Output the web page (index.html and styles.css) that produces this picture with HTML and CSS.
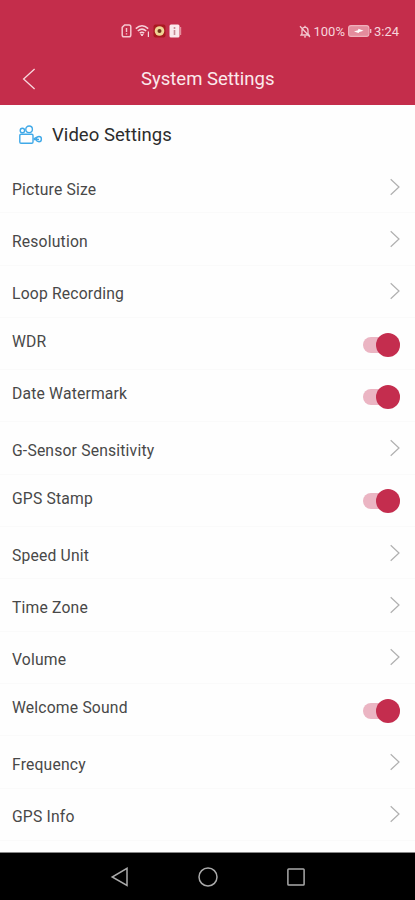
FILE: index.html
```
<!DOCTYPE html>
<html lang="en">
<head>
  <meta charset="UTF-8">
  <meta name="viewport" content="width=device-width, initial-scale=1.0">
  <title>System Settings</title>
  <link rel="stylesheet" href="styles.css">
</head>
<body>
  <!-- shared icons -->
  <svg class="sprite" width="0" height="0">
    <symbol id="chevron" viewBox="0 0 10 18">
      <path d="M0.7 1.2 L9 9 L0.7 16.8" fill="none" stroke="#b0b0b0" stroke-width="1.2"/>
    </symbol>
  </svg>

  <header class="header">
    <div class="status-bar">
      <div class="status-left">
        <svg width="11" height="14" viewBox="0 0 11 14" fill="none" stroke="#f5c6cf">
          <path d="M1.2 3.4 L3.6 1 H8 Q9.8 1 9.8 2.8 V11 Q9.8 12.8 8 12.8 H3 Q1.2 12.8 1.2 11 Z" stroke-width="1.5"/>
          <path d="M5.5 4 V8 M5.5 9.2 V10.6" stroke-width="1.4"/>
        </svg>
        <svg width="15" height="14" viewBox="0 0 15 14" fill="none" stroke="#f5d3da">
          <path d="M0.8 4.6 Q7 -1 13.2 4.6 M2.8 7 Q7 3.3 11.2 7 M4.8 9.2 Q7 7.4 9.2 9.2" stroke-width="1.5"/>
          <path d="M5.8 10.4 L7 12 L8.2 10.4 Z" fill="#f5d3da"/>
          <path d="M13.4 7.5 V13" stroke-width="1.2"/>
        </svg>
        <svg width="13" height="14" viewBox="0 0 13 14">
          <rect x="0.5" y="0.5" width="12" height="13" rx="2" fill="#a91a20"/>
          <circle cx="6.5" cy="7" r="4.8" fill="#efd594"/>
          <circle cx="6.5" cy="7" r="2" fill="#71351c"/>
        </svg>
        <svg width="13" height="14" viewBox="0 0 13 14">
          <rect x="0.5" y="0.5" width="10" height="13" rx="1.5" fill="#fae9ec"/>
          <path d="M11.5 3 V11" stroke="#e58d9c" stroke-width="1.4"/>
          <path d="M5.5 3 V5 M5.5 6 V11" stroke="#c78b95" stroke-width="1.6"/>
        </svg>
      </div>
      <div class="status-right">
        <svg width="12" height="13" viewBox="0 0 12 13" fill="none" stroke="#f3c8d0" stroke-width="1.3">
          <path d="M2 10 H10 L9 8.5 V5.5 Q9 2.5 6 2.2 Q3 2.5 3 5.5 V8.5 Z M5 11.8 H7 M6 0.8 V2 M1 1.2 L11 12"/>
        </svg>
        <span class="percent">100%</span>
        <svg class="battery" width="24" height="12" viewBox="0 0 24 12">
          <rect x="0.6" y="0.6" width="20.3" height="10.8" rx="2.5" fill="#e48c9d" stroke="#efb1bc" stroke-width="1.1"/>
          <path d="M6 6.5 L10 5.2 L10.5 3.8 L15.5 5.7 L11.3 7 L10.6 8 Z" fill="#fff"/>
          <path d="M22.6 4 V8" stroke="#f0b9c2" stroke-width="1.5"/>
        </svg>
        <span class="time">3:24</span>
      </div>
    </div>
    <div class="title-bar">
      <svg class="back" width="14" height="22" viewBox="0 0 14 22">
        <path d="M12.6 1 L1.6 11 L12.6 21" fill="none" stroke="#f7d8de" stroke-width="1.3"/>
      </svg>
      <h1>System Settings</h1>
    </div>
  </header>

  <main>
    <div class="section-title">
      <svg width="25" height="20" viewBox="0 0 25 20" fill="none" stroke="#40a9e8" stroke-width="1.4">
        <circle cx="4.4" cy="5.5" r="2.2"/>
        <circle cx="11.1" cy="4.3" r="3.3"/>
        <rect x="1.8" y="9.2" width="13.2" height="9" rx="1.2"/>
        <path d="M15.6 13.8 L19 12.2 M15.6 14.5 H21"/>
        <path d="M18.2 14.5 Q18.5 11.5 21 11.5 Q23.4 11.5 23.4 14 Q23.4 16.8 21 16.8 Q18.8 16.8 18 14.8"/>
      </svg>
      <h2>Video Settings</h2>
    </div>

    <ul class="settings">
      <li><span>Picture Size</span><svg class="chevron"><use href="#chevron"/></svg></li>
      <li><span>Resolution</span><svg class="chevron"><use href="#chevron"/></svg></li>
      <li><span>Loop Recording</span><svg class="chevron"><use href="#chevron"/></svg></li>
      <li class="switch-row"><span>WDR</span><div class="toggle"></div></li>
      <li class="switch-row"><span>Date Watermark</span><div class="toggle"></div></li>
      <li><span>G-Sensor Sensitivity</span><svg class="chevron"><use href="#chevron"/></svg></li>
      <li class="switch-row"><span>GPS Stamp</span><div class="toggle"></div></li>
      <li><span>Speed Unit</span><svg class="chevron"><use href="#chevron"/></svg></li>
      <li><span>Time Zone</span><svg class="chevron"><use href="#chevron"/></svg></li>
      <li><span>Volume</span><svg class="chevron"><use href="#chevron"/></svg></li>
      <li class="switch-row"><span>Welcome Sound</span><div class="toggle"></div></li>
      <li><span>Frequency</span><svg class="chevron"><use href="#chevron"/></svg></li>
      <li><span>GPS Info</span><svg class="chevron"><use href="#chevron"/></svg></li>
    </ul>
  </main>

  <nav class="nav-bar">
    <svg width="20" height="20" viewBox="0 0 20 20"><path d="M17 1.3 V18.5 L2.2 10 Z"/></svg>
    <svg width="20" height="20" viewBox="0 0 20 20"><circle cx="10" cy="10" r="9"/></svg>
    <svg width="20" height="20" viewBox="0 0 20 20"><rect x="1.9" y="1.9" width="16.2" height="16.2" rx="0.8"/></svg>
  </nav>
</body>
</html>
```
FILE: styles.css
```
* {
  box-sizing: border-box;
}

body {
  margin: 0;
  height: 900px;
  display: flex;
  flex-direction: column;
  background: #fefefe;
  font-family: Roboto, Arial, sans-serif;
  overflow: hidden;
}

.sprite {
  position: absolute;
}

/* Header */
.header {
  height: 105px;
  background: #c42d4b;
  color: #fbe9ec;
}

.status-bar {
  height: 52px;
  padding: 10px 16px 0 121px;
  display: flex;
  justify-content: space-between;
  align-items: center;
}

.status-left, .status-right {
  display: flex;
  align-items: center;
}

.status-left {
  gap: 3px;
}

.status-right {
  font-size: 13px;
  color: #f7d5dc;
}

.percent {
  margin-left: 2px;
}

.battery {
  margin: 0 2px 0 3px;
}

.title-bar {
  height: 53px;
  display: flex;
  align-items: center;
  padding-left: 22px;
}

.title-bar h1 {
  margin: 0 0 0 105px;
  font-size: 18.5px;
  font-weight: 400;
  letter-spacing: 0;
}

/* List */
.section-title {
  height: 56px;
  padding: 3px 0 0 18px;
  display: flex;
  align-items: center;
}

.section-title h2 {
  margin: 0 0 0 9px;
  font-size: 18.5px;
  font-weight: 400;
  letter-spacing: 0.05px;
  color: #2c2c2c;
}

.settings {
  list-style: none;
  margin: 0;
  padding: 0;
}

.settings li {
  height: 52.3px;
  padding: 0 15px 0 12px;
  display: flex;
  justify-content: space-between;
  align-items: center;
  border-bottom: 1px solid #fafafa;
  font-size: 15.7px;
  letter-spacing: 0.18px;
  color: #484848;
}

.settings span {
  padding-top: 5px;
}

.settings .switch-row span {
  padding: 0 0 4px;
}

.chevron {
  width: 10px;
  height: 18px;
}

.toggle {
  width: 37px;
  height: 16px;
  margin-top: 2px;
  display: flex;
  align-items: center;
  justify-content: flex-end;
  background: #ebb5c3;
  border-radius: 8px;
}

.toggle::after {
  content: '';
  flex: none;
  width: 24px;
  height: 24px;
  border-radius: 50%;
  background: #c42d4e;
}

/* Android navigation */
.nav-bar {
  height: 48px;
  margin-top: auto;
  background: #000;
  border-top: 1px solid #888;
  display: flex;
  justify-content: center;
  align-items: center;
  gap: 68px;
}

.nav-bar svg {
  fill: none;
  stroke: #aaa;
  stroke-width: 1.5;
}
```
